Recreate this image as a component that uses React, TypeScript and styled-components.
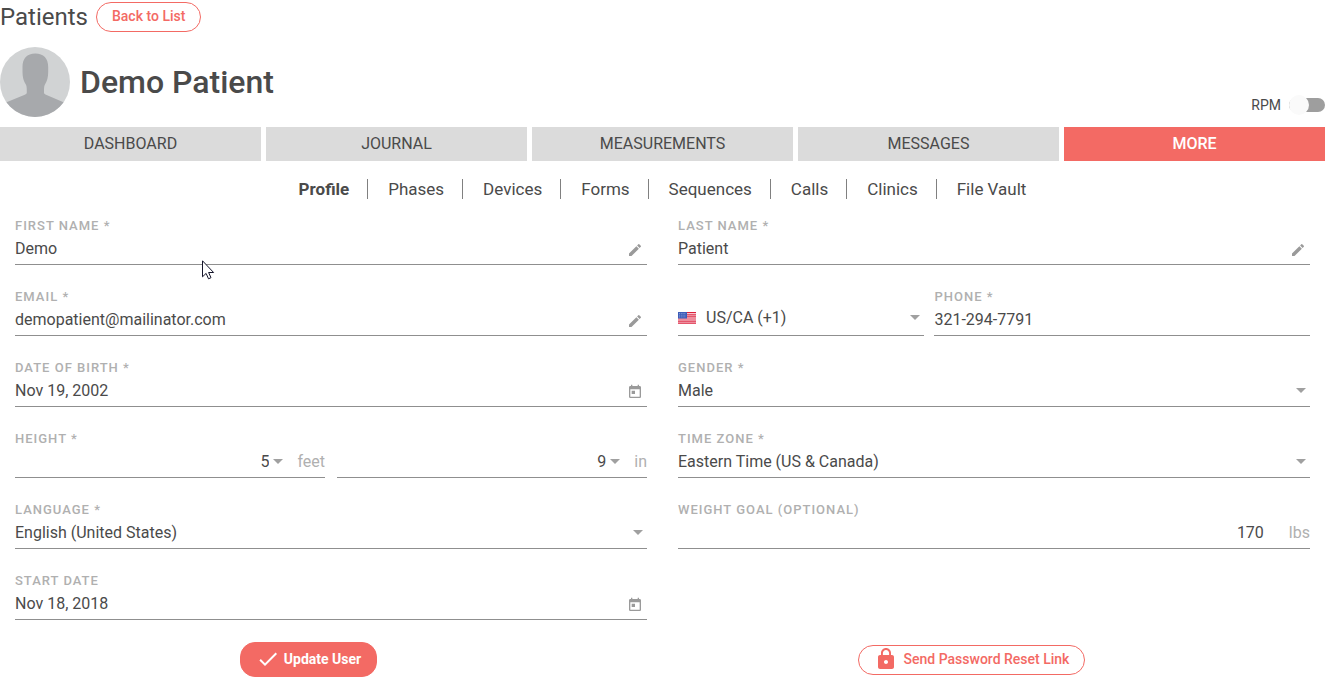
import React, { useId, useState } from 'react';
import styled, { createGlobalStyle } from 'styled-components';
import { MdCheck, MdEdit, MdLock, MdToday } from 'react-icons/md';

const coral = '#f36a64';
const ink = '#4a4a4a';
const muted = '#b0b0b0';

const GlobalStyle = createGlobalStyle`
  * { box-sizing: border-box; }
  body {
    margin: 0;
    background: #fff;
    color: ${ink};
    font-family: Roboto, "Liberation Sans", sans-serif;
    font-size: 16px;
  }
  input, select, button { font: inherit; color: inherit; }
`;

const Page = styled.main`
  position: relative;
`;

const TitleBar = styled.header`
  display: flex;
  align-items: center;
  gap: 8px;
  padding: 2px 0 15px;
`;

const PageTitle = styled.h2`
  margin: 0;
  font-size: 24px;
  font-weight: 400;
  line-height: 30px;
`;

const PillButton = styled.button<{ $filled?: boolean }>`
  display: flex;
  align-items: center;
  gap: ${(p) => (p.$filled ? 4 : 6)}px;
  height: ${(p) => (p.$filled ? 35 : 30)}px;
  padding: 0 15px 2px;
  border: 1px solid ${coral};
  border-radius: 15px;
  background: ${(p) => (p.$filled ? coral : '#fff')};
  color: ${(p) => (p.$filled ? '#fff' : coral)};
  font-size: 14px;
  font-weight: ${(p) => (p.$filled ? 700 : 500)};
  line-height: 16px;
  white-space: nowrap;
  cursor: pointer;
`;

const PatientBar = styled.section`
  display: flex;
  align-items: center;
  gap: 10px;
  padding-bottom: 10px;
`;

const PatientName = styled.h1`
  margin: 0;
  flex: 1;
  font-size: 32px;
  font-weight: 500;
  line-height: 40px;
`;

const SwitchLabel = styled.label`
  display: flex;
  align-items: center;
  align-self: flex-end;
  gap: 8px;
  padding-bottom: 2px;
  font-size: 14px;
  line-height: 20px;
`;

const Switch = styled.input`
  appearance: none;
  display: flex;
  align-items: center;
  width: 36px;
  height: 14px;
  margin: 0;
  border-radius: 7px;
  background: #9e9e9e;
  cursor: pointer;

  &::before {
    content: '';
    width: 20px;
    height: 20px;
    flex: none;
    border-radius: 50%;
    background: #fafafa;
  }
  &:checked { justify-content: flex-end; background: ${coral}; }
`;

const Tabs = styled.nav`
  display: grid;
  grid-template-columns: repeat(5, 1fr);
  gap: 5px;
`;

const Tab = styled.button<{ $active?: boolean }>`
  height: 34px;
  padding: 0 0 2px;
  border: 0;
  background: ${(p) => (p.$active ? coral : '#dbdbdb')};
  color: ${(p) => (p.$active ? '#fff' : ink)};
  font-weight: ${(p) => (p.$active ? 500 : 400)};
  cursor: pointer;
`;

const SubNav = styled.nav`
  display: flex;
  justify-content: center;
  padding: 18px 0 19px;
`;

const SubLink = styled.a<{ $active?: boolean }>`
  padding: 0 18px 0 20px;
  border-right: 1px solid #808080;
  color: ${ink};
  font-size: 17px;
  font-weight: ${(p) => (p.$active ? 700 : 400)};
  line-height: 20px;
  text-decoration: none;

  &:first-child { padding-left: 0; }
  &:last-child { padding-right: 0; border-right: 0; }
`;

const Form = styled.form`
  padding: 0 15px;
`;

const Fields = styled.div`
  display: grid;
  grid-template-columns: 1fr 1fr;
  gap: 24px 31px;
`;

const FieldBox = styled.div`
  display: flex;
  flex-direction: column;
  justify-content: flex-end;
  min-width: 0;
`;

const Label = styled.label`
  color: ${muted};
  font-size: 13px;
  font-weight: 500;
  line-height: 16px;
  letter-spacing: 1px;
  text-transform: uppercase;
`;

const Control = styled.div<{ $tall?: boolean }>`
  display: flex;
  align-items: center;
  height: ${(p) => (p.$tall ? 35 : 31)}px;
  border-bottom: 1px solid #8f8f8f;
  color: #9a9a9a;
`;

const TextInput = styled.input<{ $end?: boolean }>`
  flex: 1;
  min-width: 0;
  padding: 0;
  border: 0;
  outline: 0;
  background: transparent;
  color: ${ink};
  line-height: 20px;
  text-align: ${(p) => (p.$end ? 'right' : 'left')};
`;

const Select = styled.select<{ $end?: boolean }>`
  appearance: none;
  flex: 1;
  min-width: 0;
  padding: 0;
  border: 0;
  outline: 0;
  background: transparent;
  color: ${ink};
  line-height: 20px;
  text-align-last: ${(p) => (p.$end ? 'right' : 'left')};
`;

const ArrowSvg = styled.svg`
  flex: none;
  margin: 0 4px 1px;
`;

const Trail = styled.span`
  display: flex;
  padding: 2px 4px 0;
`;

const Unit = styled.span<{ $gap: number }>`
  padding-left: ${(p) => p.$gap}px;
  color: ${muted};
  line-height: 20px;
`;

const FlagSvg = styled.svg`
  flex: none;
  margin-right: 10px;
`;

const HeightPair = styled.div`
  display: grid;
  grid-template-columns: 1fr 1fr;
  gap: 12px;
  align-items: end;
`;

const PhonePair = styled.div`
  display: grid;
  grid-template-columns: 39% 1fr;
  gap: 10px;
  align-items: end;
`;

const Actions = styled.div`
  display: grid;
  grid-template-columns: 1fr 1fr;
  column-gap: 31px;
  padding-top: 22px;
`;

const Action = styled.div`
  display: flex;
  align-items: center;
  justify-content: center;
  padding-right: 45px;
`;

const Pointer = styled.svg`
  position: absolute;
  left: 202px;
  top: 260px;
  pointer-events: none;
`;

const Arrow = () => (
  <ArrowSvg width="10" height="5" viewBox="0 0 10 5" aria-hidden="true">
    <path d="M0 0h10L5 5z" fill="#a0a0a0" />
  </ArrowSvg>
);

const Avatar = () => (
  <svg width="70" height="70" viewBox="0 0 70 70" role="img" aria-label="Patient photo">
    <defs>
      <clipPath id="avatar-clip"><circle cx="35" cy="35" r="35" /></clipPath>
    </defs>
    <g clipPath="url(#avatar-clip)">
      <rect width="70" height="70" fill="#d1d3d4" />
      <path
        d="M35.300 6.500C27 6.500 22.500 11.500 22.500 20v5c0 5 1 9 3.600 13 .8 1.500.7 5 .7 7.500 0 1.200-.6 1.700-2 2.300L6.500 55.300V70h57V55.300L46 47.800c-1.400-.6-2-1.100-2-2.300 0-2.500-.1-6 .7-7.500C47.200 34 48.200 30 48.200 25v-5c0-8.500-4.600-13.500-12.900-13.500z"
        fill="#a7a9ac"
      />
    </g>
  </svg>
);

const Flag = () => (
  <FlagSvg width="18" height="12" viewBox="0 0 18 12" aria-hidden="true">
    <rect width="18" height="12" fill="#fff" />
    <path
      d="M0 .7h18M0 2.800h18M0 4.900h18M0 7h18M0 9.100h18M0 11.200h18"
      stroke="#dc1f3c"
      strokeWidth="1.200"
    />
    <rect width="9" height="6.500" fill="#3c5cb8" />
    <path d="M1 1.500h7M1 3.200h7M1 4.900h7" stroke="#a9b9e4" strokeWidth=".7" strokeDasharray=".9 .9" />
  </FlagSvg>
);

type TextFieldProps = {
  label: string;
  value: string;
  type?: string;
  icon?: React.ReactNode;
  unit?: string;
};

function TextField({ label, value, type = 'text', icon, unit }: TextFieldProps) {
  const id = useId();
  return (
    <FieldBox>
      <Label htmlFor={id}>{label}</Label>
      <Control>
        <TextInput id={id} type={type} defaultValue={value} $end={!!unit} />
        {icon && <Trail>{icon}</Trail>}
        {unit && <Unit $gap={25}>{unit}</Unit>}
      </Control>
    </FieldBox>
  );
}

type SelectFieldProps = {
  label?: string;
  name: string;
  options: string[];
  unit?: string;
  flag?: boolean;
};

function SelectField({ label, name, options, unit, flag }: SelectFieldProps) {
  const id = useId();
  return (
    <FieldBox>
      {label && <Label htmlFor={id}>{label}</Label>}
      <Control $tall={flag}>
        {flag && <Flag />}
        <Select id={id} aria-label={label ? undefined : name} defaultValue={options[0]} $end={!!unit}>
          {options.map((o) => <option key={o}>{o}</option>)}
        </Select>
        <Arrow />
        {unit && <Unit $gap={10}>{unit}</Unit>}
      </Control>
    </FieldBox>
  );
}

const tabs = ['DASHBOARD', 'JOURNAL', 'MEASUREMENTS', 'MESSAGES', 'MORE'];
const sections = ['Profile', 'Phases', 'Devices', 'Forms', 'Sequences', 'Calls', 'Clinics', 'File Vault'];

export default function App() {
  const [rpm, setRpm] = useState(false);
  return (
    <Page>
      <GlobalStyle />
      <TitleBar>
        <PageTitle>Patients</PageTitle>
        <PillButton type="button">Back to List</PillButton>
      </TitleBar>
      <PatientBar>
        <Avatar />
        <PatientName>Demo Patient</PatientName>
        <SwitchLabel>
          RPM
          <Switch type="checkbox" role="switch" checked={rpm} onChange={() => setRpm(!rpm)} />
        </SwitchLabel>
      </PatientBar>
      <Tabs>
        {tabs.map((t) => <Tab key={t} type="button" $active={t === 'MORE'}>{t}</Tab>)}
      </Tabs>
      <SubNav>
        {sections.map((s) => (
          <SubLink key={s} href="#" $active={s === 'Profile'}>{s}</SubLink>
        ))}
      </SubNav>
      <Form onSubmit={(e) => e.preventDefault()}>
        <Fields>
          <TextField label="First name *" value="Demo" icon={<MdEdit size={16} />} />
          <TextField label="Last name *" value="Patient" icon={<MdEdit size={16} />} />
          <TextField label="Email *" type="email" value="demopatient@mailinator.com" icon={<MdEdit size={16} />} />
          <PhonePair>
            <SelectField name="Country code" options={['US/CA (+1)']} flag />
            <TextField label="Phone *" type="tel" value="321-294-7791" />
          </PhonePair>
          <TextField label="Date of birth *" value="Nov 19, 2002" icon={<MdToday size={16} />} />
          <SelectField label="Gender *" name="Gender" options={['Male', 'Female']} />
          <HeightPair>
            <SelectField label="Height *" name="Feet" options={['5', '4', '6']} unit="feet" />
            <SelectField name="Inches" options={['9', '10', '11']} unit="in" />
          </HeightPair>
          <SelectField label="Time zone *" name="Time zone" options={['Eastern Time (US & Canada)']} />
          <SelectField label="Language *" name="Language" options={['English (United States)']} />
          <TextField label="Weight goal (optional)" value="170" unit="lbs" />
          <TextField label="Start date" value="Nov 18, 2018" icon={<MdToday size={16} />} />
        </Fields>
        <Actions>
          <Action>
            <PillButton type="submit" $filled><MdCheck size={24} />Update User</PillButton>
          </Action>
          <Action>
            <PillButton type="button"><MdLock size={24} />Send Password Reset Link</PillButton>
          </Action>
        </Actions>
      </Form>
      <Pointer width="13" height="20" viewBox="0 0 13 20" aria-hidden="true">
        <path
          d="M.5.800v16l3.600-3.400 2.400 5.400 2.500-1.100-2.400-5.200h5z"
          fill="#fff"
          stroke="#15152a"
          strokeWidth="1"
        />
      </Pointer>
    </Page>
  );
}
